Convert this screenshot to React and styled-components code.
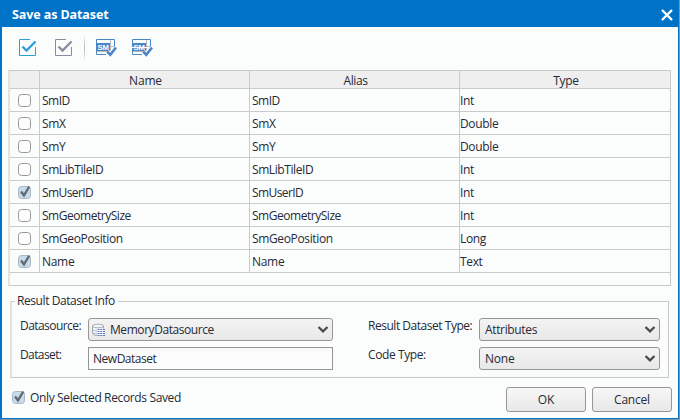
import React from "react";
import styled, { createGlobalStyle } from "styled-components";

const GlobalStyle = createGlobalStyle`
  * { box-sizing: border-box; }
  body { margin: 0; }
`;

const Dialog = styled.main`
  display: flex;
  flex-direction: column;
  width: 680px;
  height: 420px;
  overflow: hidden;
  font: 12px/16px "Open Sans", "Noto Sans", sans-serif;
  color: #262a36;
  background: #fbfdfd;
  border-left: 2px solid #0173c7;
  border-right: 1px solid #7f96a8;
  border-bottom: 1px solid #7f96a8;
`;
const TitleBar = styled.header`
  display: flex;
  flex: none;
  align-items: center;
  justify-content: space-between;
  height: 27px;
  padding: 2px 5px 0 10px;
  background: #0173c7;
  color: #fff;
`;
const Title = styled.h1`
  margin: 0;
  font-size: 12.5px;
  line-height: 16px;
  font-weight: 700;
  letter-spacing: -0.1px;
`;
const CloseButton = styled.button`
  display: flex;
  width: 14px;
  height: 14px;
  padding: 0;
  border: 0;
  background: none;
`;
const Body = styled.div`
  flex: 1;
  padding: 0 5px 0 6px;
  border-right: 1px solid #0173c7;
  border-bottom: 1px solid #0173c7;
`;
const Toolbar = styled.div`
  display: flex;
  height: 43px;
  padding: 8px 0 0 10px;
`;
const Tool = styled.span`
  display: flex;
  width: 36px;
  height: 26px;
  padding-top: 3px;
`;
const Separator = styled.i`
  width: 1px;
  height: 26px;
  margin: 0 10px 0 -6px;
  background: linear-gradient(#f5f6f6, #b4b6b8, #f5f6f6);
`;
const Grid = styled.div`
  width: 663px;
  height: 216px;
  border: solid #c9c9c9;
  border-width: 1px 1px 1px 2px;
  border-left-color: #e2e3e3;
`;
const Row = styled.div`
  display: grid;
  grid-template-columns: 30px 210px 210px 1fr;
  height: ${(p) => (p.$head ? 18 : 23)}px;
  background: ${(p) => (p.$head ? "#efefef" : "transparent")};
  border-bottom: 1px solid #cbcbcb;
`;
const Cell = styled.div`
  display: flex;
  align-items: center;
  justify-content: ${(p) => (p.$center ? "center" : "flex-start")};
  padding-left: ${(p) => p.$pad ?? 0}px;
  padding-top: ${(p) => p.$top ?? 0}px;
  border-right: 1px solid #cbcbcb;
  &:last-child { border-right: 0; }
`;
const Label = styled.span`
  white-space: nowrap;
  letter-spacing: ${(p) => p.$ls ?? -0.4}px;
`;
const CheckFrame = styled.span`
  display: flex;
  flex: none;
  width: 13px;
  height: 13px;
  border: 1px solid ${(p) => (p.$on ? "#a9b8c4" : "#979797")};
  border-radius: 3.5px;
  background: ${(p) => (p.$on ? "#c6dbec" : "#fdfdfd")};
  svg { flex: none; margin: -2px 0 0 -1px; }
`;
const Group = styled.fieldset`
  display: grid;
  grid-template-columns: 68px 245px 35px 111px 181px;
  grid-template-rows: 23px 23px;
  row-gap: 6px;
  width: 659px;
  height: 85px;
  margin: 7px 0 0 2px;
  padding: 8px 0 0 8px;
  border: solid #c9c9c9;
  border-width: 1px 1px 1px 2px;
  border-left-color: #e2e3e3;
`;
const Legend = styled.legend`
  height: 17px;
  margin-left: -5px;
  padding: 0 3px 0 2px;
`;
const FieldLabel = styled.label`
  grid-column: ${(p) => p.$col};
  white-space: nowrap;
`;
const Select = styled.div`
  display: flex;
  align-items: center;
  justify-content: space-between;
  grid-column: ${(p) => p.$col};
  height: 23px;
  padding: 0 3px 0 ${(p) => p.$pad ?? 5}px;
  border: 1px solid #969696;
  border-radius: 3px;
  background: linear-gradient(#f4f4f4, #e8e8e8);
`;
const Value = styled.span`
  display: flex;
  align-items: center;
  gap: 4px;
`;
const Field = styled.div`
  height: 23px;
  padding: 3px 4px;
  border: 1px solid #969696;
  background: linear-gradient(#f7f7f7, #fdfdfd 6px);
`;
const Footer = styled.footer`
  display: flex;
  align-items: flex-start;
  gap: 6px;
  padding: 9px 1px 0 4px;
`;
const Option = styled.label`
  display: flex;
  align-items: center;
  gap: 5px;
  flex: 1;
  height: 21px;
`;
const Button = styled.button`
  width: 80px;
  height: 25px;
  padding: 0;
  border: 1px solid #969696;
  border-radius: 3px;
  background: linear-gradient(#f7f7f7, #e8e8e8);
  font: inherit;
  color: inherit;
`;

const Check = ({ on }) => (
  <CheckFrame $on={on}>
    {on && (
      <svg width="14" height="13" viewBox="0 0 14 13">
        <path d="M3 6.5L6 10.3L11.3 1.5" fill="none" stroke="#656b73" strokeWidth="2.4" />
      </svg>
    )}
  </CheckFrame>
);
const SelectIcon = ({ color }) => (
  <svg width="20" height="20" viewBox="0 0 20 20" fill="none">
    <path d="M12 1.5H1.5V17.5H17.5V9" stroke={color} />
    <path d="M4.5 8.5L8.5 12.5L17.5 3.5" stroke={color} strokeWidth="2.3" />
  </svg>
);
const FieldIcon = ({ struck }) => (
  <svg width="22" height="20" viewBox="0 0 22 20" fill="none">
    <path d="M15.5 2V13M2 13.5H13M15 8.5H19" stroke="#b8bec5" />
    <path d="M11 16.5H1.5V1.5H19.5V10" stroke="#4a86c5" />
    <path d="M1 5H15V13H1Z" fill="#4a86c5" />
    <text x="2.5" y="11.6" fill="#fff" fontFamily="Liberation Sans" fontSize="7.2" fontWeight="700" textLength="11.5" lengthAdjust="spacingAndGlyphs">SM</text>
    {struck && <path d="M0 9.5H16" stroke="#fff" />}
    <path d="M12.2 13.5L15.3 16.8L21 9.5" stroke="#fbfdfd" strokeWidth="4.4" />
    <path d="M12.2 13.5L15.3 16.8L21 9.5" stroke="#4a86c5" strokeWidth="2.6" />
  </svg>
);
const Database = () => (
  <svg width="14" height="14" viewBox="0 0 14 14" fill="none">
    <path d="M.5 3C.5.6 11.5.6 11.5 3V12H6C2 12 .5 11 .5 10Z" fill="#f7f8fa" />
    <path d="M5 12.5C2 12.3.5 11.5.5 10V3M.5 6.2C1 7.5 3 8 5 8M.5 9.3C1 10.4 3 10.8 5 10.8M11.5 3V5.5M.5 3C.5 5.4 11.5 5.4 11.5 3S.5.6.5 3Z" stroke="#9ba1b0" strokeWidth=".9" />
    <path d="M5.5 6.5H13M5.5 8.5H13M5.5 10.5H13M5.5 12.5H13" stroke="#6273b8" strokeDasharray="2 .8" />
  </svg>
);
const Chevron = () => (
  <svg width="12" height="9" viewBox="0 0 12 9">
    <path d="M1.5 2L6 6.3L10.5 2" fill="none" stroke="#4a4b4e" strokeWidth="2.3" />
  </svg>
);

const fields = [
  { name: "SmID", type: "Int", spacing: -0.5 },
  { name: "SmX", type: "Double", spacing: -0.3 },
  { name: "SmY", type: "Double", spacing: -0.3 },
  { name: "SmLibTileID", type: "Int", spacing: -0.42 },
  { name: "SmUserID", type: "Int", spacing: -0.6, on: true },
  { name: "SmGeometrySize", type: "Int", spacing: -0.47 },
  { name: "SmGeoPosition", type: "Long", spacing: -0.36 },
  { name: "Name", type: "Text", spacing: -0.3, on: true },
];

export default function App() {
  return (
    <>
      <GlobalStyle />
      <Dialog>
        <TitleBar>
          <Title>Save as Dataset</Title>
          <CloseButton aria-label="Close">
            <svg width="14" height="14" viewBox="0 0 14 14">
              <path d="M2 2L12 12M12 2L2 12" stroke="#fff" strokeWidth="2.4" />
            </svg>
          </CloseButton>
        </TitleBar>
        <Body>
          <Toolbar>
            <Tool><SelectIcon color="#2b9fdb" /></Tool>
            <Tool><SelectIcon color="#858da0" /></Tool>
            <Separator />
            <Tool><FieldIcon /></Tool>
            <Tool><FieldIcon struck /></Tool>
          </Toolbar>
          <Grid>
            <Row $head>
              <Cell />
              <Cell $center $pad={2} $top={2}><Label $ls={-0.2}>Name</Label></Cell>
              <Cell $center $pad={2} $top={2}><Label>Alias</Label></Cell>
              <Cell $center $pad={2} $top={2}><Label $ls={-0.3}>Type</Label></Cell>
            </Row>
            {fields.map(({ name, type, spacing, on }) => (
              <Row key={name}>
                <Cell $center><Check on={on} /></Cell>
                <Cell $pad={2} $top={2}><Label $ls={spacing}>{name}</Label></Cell>
                <Cell $pad={2} $top={2}><Label $ls={spacing}>{name}</Label></Cell>
                <Cell $top={2}><Label $ls={-0.35}>{type}</Label></Cell>
              </Row>
            ))}
          </Grid>
          <Group>
            <Legend><Label $ls={-0.42}>Result Dataset Info</Label></Legend>
            <FieldLabel $col={1}><Label $ls={-0.55}>Datasource:</Label></FieldLabel>
            <Select $col={2} $pad={3}>
              <Value><Database /><Label $ls={-0.43}>MemoryDatasource</Label></Value>
              <Chevron />
            </Select>
            <FieldLabel $col={4}><Label $ls={-0.47}>Result Dataset Type:</Label></FieldLabel>
            <Select $col={5}><Label $ls={-0.35}>Attributes</Label><Chevron /></Select>
            <FieldLabel $col={1}><Label $ls={-0.6}>Dataset:</Label></FieldLabel>
            <Field><Label $ls={-0.48}>NewDataset</Label></Field>
            <FieldLabel $col={4}><Label>Code Type:</Label></FieldLabel>
            <Select $col={5}><Label $ls={-0.2}>None</Label><Chevron /></Select>
          </Group>
          <Footer>
            <Option><Check on /><Label $ls={-0.36}>Only Selected Records Saved</Label></Option>
            <Button><Label $ls={-0.2}>OK</Label></Button>
            <Button><Label $ls={-0.2}>Cancel</Label></Button>
          </Footer>
        </Body>
      </Dialog>
    </>
  );
}
